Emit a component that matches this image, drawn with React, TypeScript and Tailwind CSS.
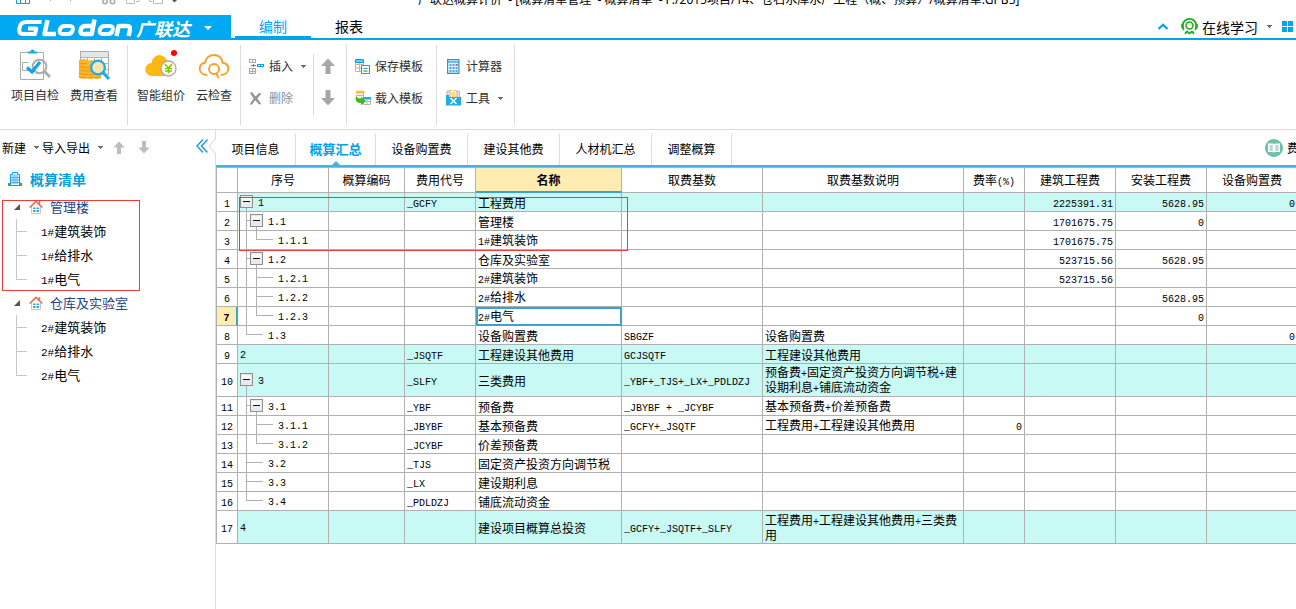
import React from "react";

const SANS = "font-['Noto_Sans_CJK_SC',sans-serif]";
const MONO10 = "font-['Liberation_Mono',monospace] text-[10px] leading-none";
const MONO11 = "font-['Liberation_Mono',monospace] text-[11px] leading-none";

/** Sets half-width characters in a fixed-pitch face so they take half an ideograph each. */
function Mixed({ text, mono = MONO10 }: { text: string; mono?: string }) {
  const parts = text.match(/[\x20-\x7e]+|[^\x20-\x7e]+/g) ?? [];
  return (
    <>
      {parts.map((p, i) =>
        /^[\x20-\x7e]/.test(p) ? (
          <span key={i} className={mono}>{p}</span>
        ) : (
          <React.Fragment key={i}>{p}</React.Fragment>
        )
      )}
    </>
  );
}

function Caret({ className = "text-[#6b6b78]" }: { className?: string }) {
  return (
    <svg viewBox="0 0 5 3" className={`h-[3px] w-[5px] shrink-0 ${className}`} shapeRendering="crispEdges">
      <path d="M0 0h5v1h-1v1h-1v1h-1v-1h-1v-1h-1z" fill="currentColor" />
    </svg>
  );
}

function Arrow({ down = false, color, className }: { down?: boolean; color: string; className: string }) {
  return (
    <svg viewBox="0 0 14 16" className={className}>
      <path d={down ? "M4.500 0h5v8H14l-7 7.500L0 8h4.500z" : "M7 .5l7 7.500H9.500v8h-5V8H0z"} fill={color} />
    </svg>
  );
}

/* ---------- ribbon icons ---------- */

const CheckIcon = () => (
  <svg viewBox="0 0 32 32" className="h-8 w-8" fill="none">
    <path d="M1.500 3.500h23v27h-23z" fill="#fff" stroke="#aaa" />
    <path d="M9 4.500V2.500h2.500a2 2 0 0 1 4 0H18v2z" fill="#1ba8e8" />
    <path d="M9.500 13.500h-6v8h6" stroke="#aaa" />
    <circle cx="20.500" cy="17.500" r="6.800" stroke="#ababab" strokeWidth="2" />
    <path d="M8 18.500l5 4.500 8-10" stroke="#0aa5ec" strokeWidth="3.200" />
    <path d="M25 22l6 6" stroke="#ababab" strokeWidth="3" />
  </svg>
);

const CostIcon = () => (
  <svg viewBox="0 0 32 32" className="h-8 w-8" fill="none">
    <path d="M2.500 2.500h28v23h-28z" fill="#fff" stroke="#aaa" />
    <path d="M3 3h27v5H3z" fill="#e6e6e6" />
    <path d="M2.500 8.500h28M2.500 14.500h28M2.500 20.500h28M9.500 8.500v17M16.500 8.500v17M23.500 8.500v17" stroke="#b4b4b4" />
    <path d="M1 11q4-2 8 0v1q5-2 9 0v5q5 0 5 2v10q-4 2-8 0-3 1.500-6 0-4 1.500-8 0z" fill="#fdb52b" />
    <path d="M1 14q4 1.500 8 0M1 17.500q8 2 17 0M1 21q8 2 22 0M1 24.500q8 2 22 0M1 28q8 2 22 0" stroke="#f0950d" />
    <circle cx="20" cy="18.500" r="6.800" fill="#fde3ac" stroke="#16aeef" strokeWidth="2.200" />
    <path d="M25 23.500l6 6.500" stroke="#16aeef" strokeWidth="3.200" />
  </svg>
);

const PriceIcon = () => (
  <svg viewBox="0 0 34 32" className="h-8 w-[34px]" fill="none">
    <path d="M8 27a6.500 6.500 0 0 1-.5-13 9 8 0 0 1 8-8 9 8 0 0 1 8 8c5 0 7 3 7 6.500S27 27 23 27z" fill="#fdb813" />
    <circle cx="24.500" cy="19.500" r="7.500" fill="#fff" stroke="#b0aaa0" strokeWidth="1.300" />
    <path d="M21 15l3.500 4 3.500-4M21 19.500h7M21 22h7M24.500 19v5.500" stroke="#7fc700" strokeWidth="1.500" />
    <circle cx="30" cy="4" r="3" fill="#f00" />
  </svg>
);

const CloudIcon = () => (
  <svg viewBox="0 0 32 32" className="h-8 w-8" fill="none" stroke="#fba026" strokeWidth="1.900" strokeLinecap="round">
    <path d="M8.500 26c-4-.3-6.800-3-6.800-6.300 0-3.200 2.300-5.400 5.300-5.900C8 9 11.500 6 16 6s7.800 3 8.700 7.800c3.200.5 5.600 2.800 5.600 6 0 3.400-2.800 6-6.800 6.200" />
    <circle cx="16" cy="20" r="5" />
    <path d="M18.500 25l2 3.500" />
  </svg>
);

const InsertIcon = () => (
  <svg viewBox="0 0 15 15" className="h-[15px] w-[15px]" fill="none" shapeRendering="crispEdges">
    <path d="M.5.5h6v3h-6zM3.500.5v3M.5 9.500h6v5h-6zM3.500 9.500v5M.5 12h6" stroke="#aaa" />
    <path d="M8.500 5.500h6v2h-6zM11.500 5.500v2M2 6.500h5M4.500 5v3" stroke="#1a9fd8" />
  </svg>
);

const DeleteIcon = () => (
  <svg viewBox="0 0 13 13" className="h-[13px] w-[13px]">
    <path d="M1 1l2-1 3.500 4.500L10 1l2.500.5L8.300 6.500l4 5.500-2.300.5-3.700-4.200L3 12.500H.5L4.700 6.500z" fill="#949494" />
  </svg>
);

const SaveIcon = () => (
  <svg viewBox="0 0 15 15" className="h-[15px] w-[15px]" fill="none">
    <path d="M.5 1.500h8v11h-8zM.5 5.500h8M.5 9h8M4.500 1v11" stroke="#c2b4a6" />
    <path d="M.5.5h8v3h-8z" fill="#64cdf5" stroke="#109fd8" />
    <path d="M6.500 6.500h8v8h-8z" fill="#fff" stroke="#109fd8" />
    <path d="M8.500 9.500h4" stroke="#109fd8" />
    <path d="M8.500 12h4" stroke="#6bb51d" strokeWidth="1.500" />
  </svg>
);

const LoadIcon = () => (
  <svg viewBox="0 0 16 16" className="h-4 w-4" fill="none">
    <path d="M1.500 2.500h7v6h-7M1 5.500h8" stroke="#c2b4a6" />
    <path d="M1 .7h8.500v3H1z" fill="#fcc23f" />
    <path d="M8.500 8.500h7v6h-7zM8 11.500h8M12 9v6" stroke="#b5b5b5" />
    <path d="M8 7h8v2.500H8z" fill="#1caee9" />
    <path d="M1.500 6C-.5 8.500.5 13 6 13v2.500l5-4.500-5-4.500V9C3.500 9 2.500 8 1.500 6z" fill="#43b821" />
  </svg>
);

const CalcIcon = () => (
  <svg viewBox="0 0 13 15" className="ml-px h-[15px] w-[13px]" fill="none">
    <path d="M.6.6h11.300v13.800H.6z" fill="#dff4fd" stroke="#129fdb" strokeWidth="1.200" />
    <path d="M1 3h11" stroke="#129fdb" strokeWidth="1.200" />
    <path d="M2.500 6h5M2.500 9h8M2.500 12h8" stroke="#3284c9" strokeWidth="1.400" strokeDasharray="2 1" />
    <path d="M8.500 6h2.500" stroke="#f0392b" strokeWidth="1.500" />
  </svg>
);

const ToolIcon = () => (
  <svg viewBox="0 0 15 16" className="h-4 w-[15px]" fill="none">
    <path d="M1 1h12.500v7H1z" fill="#e3e3e3" stroke="#bbb" />
    <path d="M4 0h5l2 2v5H4z" fill="#fff" stroke="#f4ab3c" />
    <path d="M5.500 3h4M5.500 5h4" stroke="#f4ab3c" />
    <path d="M0 5h3v2h12v8.500H0z" fill="#1fabe8" />
    <path d="M4.500 8l6 6M10.500 8l-6 6" stroke="#fff" strokeWidth="1.500" />
  </svg>
);

function BigButton({ icon, label, className }: { icon: React.ReactNode; label: string; className: string }) {
  return (
    <button type="button" className={`flex flex-col items-center gap-[6px] ${className}`}>
      {icon}
      <span className="whitespace-nowrap leading-4">{label}</span>
    </button>
  );
}

function SmallButton({ icon, label, caret, muted }: { icon: React.ReactNode; label: string; caret?: boolean; muted?: boolean }) {
  return (
    <button type="button" className={`flex h-4 items-center whitespace-nowrap ${muted ? "text-[#8c8c96]" : ""}`}>
      <span className="flex w-5 items-center">{icon}</span>
      {label}
      {caret && <span className="ml-2"><Caret /></span>}
    </button>
  );
}

const Rule = () => <div className="h-20 w-px shrink-0 bg-[#dcdcdc]" />;

function TitleBar() {
  return (
    <header className="relative flex h-[15px] overflow-hidden">
      <svg viewBox="0 0 165 6" className="ml-4 h-[6px] w-[165px] shrink-0" fill="none">
        <path d="M.5 0v3.500h13V0M4.500 0v3M9.500 0v3" stroke="#1a9fd8" />
        <path d="M34 0l1 1M54 0l1 1" stroke="#aaa" />
        <circle cx="89" cy="1.500" r="2.200" stroke="#aaa" strokeWidth="1.500" />
        <circle cx="96.500" cy="1.500" r="2.200" stroke="#aaa" strokeWidth="1.500" />
        <path d="M110.500 0v3.500h8V0M120 1.500h3V0M133.500 0v1.500h3M137.500 0v3.500h9V0" stroke="#bbb" />
        <path d="M156 0h5l-2.500 2.500z" fill="#555" />
      </svg>
      <h1 className="-mt-2 ml-[237px] whitespace-nowrap font-['Noto_Sans','Noto_Sans_CJK_SC',sans-serif] text-xs leading-4 text-black">
        广联达概算计价&nbsp; - [概算清单管理&nbsp; - 概算清单&nbsp; - F:/2015项目/14、仓石水库水厂工程（概、预算）/概算清单.GPB5]
      </h1>
    </header>
  );
}

function MenuBar() {
  return (
    <nav className="flex h-[25px] border-b-2 border-[#00a4ee] text-sm">
      <button type="button" className="-mb-[2px] flex w-[231px] shrink-0 items-center bg-[#00a9f1] pl-4 text-white">
        <svg viewBox="0 0 116 18" className="h-[18px] w-[116px]" fill="none" stroke="#fff" strokeLinejoin="round">
          <path d="M25.500 3H11C5.500 3 4.300 5 3.500 9c-.8 4.500 0 6 4 6h11.500l1.300-5.500H12" strokeWidth="4" />
          <path d="M31.500 1L28.500 15H40" strokeWidth="4.500" />
          <path d="M49 7h4.500c3 0 3.800 1 3.200 4-.6 3-1.700 4-4.700 4h-5c-3 0-3.800-1-3.200-4 .6-3 2.200-4 5.200-4z" strokeWidth="4" />
          <path d="M77 7h-7.500c-3 0-4.200 1-4.800 4-.6 3 0 4 3 4h8L78.500.5" strokeWidth="4.500" />
          <path d="M89 7h4.500c3 0 3.800 1 3.200 4-.6 3-1.700 4-4.700 4h-5c-3 0-3.800-1-3.200-4 .6-3 2.200-4 5.200-4z" strokeWidth="4" />
          <path d="M100.500 17L102.700 7h8c3 0 3.700 1 3.200 4l-1.400 6" strokeWidth="4.500" />
        </svg>
        <span className="ml-1 text-lg font-bold italic leading-none">广联达</span>
        <svg viewBox="0 0 8 4" className="ml-[14px] h-1 w-2"><path d="M0 0h8L4 4z" fill="#fff" /></svg>
      </button>
      <a href="#edit" className="-mb-[2px] ml-1 flex h-[25px] w-[76px] items-center justify-center border-b-4 border-[#00a4ee] text-[#00a4ee]">编制</a>
      <a href="#report" className="flex h-[21px] w-[76px] items-center justify-center text-black">报表</a>
      <div className="ml-auto flex items-center text-black">
        <svg viewBox="0 0 12 7" className="h-[7px] w-3" fill="none"><path d="M1.500 6L6 1.700 10.500 6" stroke="#00a4ee" strokeWidth="2.200" /></svg>
        <svg viewBox="0 0 17 17" className="ml-3 h-[17px] w-[17px]" fill="none" stroke="#1fae1f">
          <path d="M2.800 12a7 7 0 1 1 11.400 0" strokeWidth="1.800" />
          <circle cx="8.500" cy="7.500" r="3.500" strokeWidth="1.600" />
          <path d="M1.500 6v4M15.500 6v4" strokeWidth="2.500" />
          <path d="M3.500 16.500c0-3 2-4 3-4l2 2 2-2c1 0 3 1 3 4l-3-1.500-2 1.500-2-1.500z" fill="#1fae1f" stroke="none" />
        </svg>
        <a href="#learn" className="ml-1 leading-5">在线学习</a>
        <span className="ml-[9px] flex"><Caret /></span>
        <svg viewBox="0 0 11 11" className="ml-[10px] mr-[3px] h-[11px] w-[11px]"><path d="M0 0h5v5H0zM6 0h5v5H6zM0 6h5v5H0zM6 6h5v5H6z" fill="#00a4ee" /></svg>
      </div>
    </nav>
  );
}

function Ribbon() {
  return (
    <section className="flex h-[90px] border-b border-[#dcdcdc] pt-[5px] text-xs text-[#2f2f2f]">
      <div className="flex w-[127px] shrink-0 gap-[11px] pl-[11px] pt-1">
        <BigButton className="w-12" icon={<CheckIcon />} label="项目自检" />
        <BigButton className="w-12" icon={<CostIcon />} label="费用查看" />
      </div>
      <Rule />
      <div className="flex w-28 shrink-0 gap-[11px] pl-[9px] pt-1">
        <BigButton className="w-12" icon={<PriceIcon />} label="智能组价" />
        <BigButton className="w-9" icon={<CloudIcon />} label="云检查" />
      </div>
      <Rule />
      <div className="flex w-[72px] shrink-0 flex-col gap-4 pl-2 pt-[13px]">
        <SmallButton icon={<InsertIcon />} label="插入" caret />
        <SmallButton icon={<DeleteIcon />} label="删除" muted />
      </div>
      <div className="mt-[9px] h-[62px] w-px shrink-0 bg-[#dcdcdc]" />
      <div className="flex w-8 shrink-0 flex-col items-center gap-4 pr-1 pt-[13px]">
        <button type="button" aria-label="上移"><Arrow color="#a6a6a6" className="h-4 w-[14px]" /></button>
        <button type="button" aria-label="下移"><Arrow down color="#a6a6a6" className="h-4 w-[14px]" /></button>
      </div>
      <Rule />
      <div className="flex w-[89px] shrink-0 flex-col gap-4 pl-2 pt-[13px]">
        <SmallButton icon={<SaveIcon />} label="保存模板" />
        <SmallButton icon={<LoadIcon />} label="载入模板" />
      </div>
      <Rule />
      <div className="flex w-[77px] shrink-0 flex-col gap-4 pl-[9px] pt-[13px]">
        <SmallButton icon={<CalcIcon />} label="计算器" />
        <SmallButton icon={<ToolIcon />} label="工具" caret />
      </div>
      <Rule />
    </section>
  );
}

const HouseIcon = () => (
  <svg viewBox="0 0 14 14" className="h-[14px] w-[14px]" fill="none">
    <path d="M2.500 7v6.500h9V7" fill="#fff" stroke="#c9c9c9" />
    <path d="M.7 7.500L7 1.500l6.300 6" stroke="#ef6a4b" strokeWidth="1.700" />
    <path d="M10.500 1v3" stroke="#ef6a4b" strokeWidth="1.500" />
    <path d="M4 7.500h2.500V9H4zM7.500 7.500H10V9H7.500zM4 10h2.500v2H4zM7.500 10H10v2H7.500z" fill="#35a9ea" />
  </svg>
);

const groups = [
  { name: "管理楼", items: ["1#建筑装饰", "1#给排水", "1#电气"] },
  { name: "仓库及实验室", items: ["2#建筑装饰", "2#给排水", "2#电气"] },
];

function Sidebar() {
  return (
    <aside className="relative w-[216px] shrink-0 border-r border-[#dedede] text-[13px] text-black">
      <div className="flex h-[37px] items-center pb-[2px] pl-[2px] text-xs">
        <button type="button" className="flex items-center gap-2">新建<Caret /></button>
        <button type="button" className="ml-[3px] flex items-center gap-2">导入导出<Caret /></button>
        <button type="button" aria-label="上移" className="ml-[10px]"><Arrow color="#bdbdbd" className="h-[13px] w-3" /></button>
        <button type="button" aria-label="下移" className="ml-[13px]"><Arrow down color="#bdbdbd" className="h-[13px] w-3" /></button>
        <button type="button" aria-label="收起" className="-mt-1 ml-auto mr-[7px]">
          <svg viewBox="0 0 12 14" className="h-[14px] w-3" fill="none" stroke="#16a0cc" strokeWidth="1.400"><path d="M7 .5L1 7l6 6.500M11.500.5l-6 6.500 6 6.500" /></svg>
        </button>
      </div>
      <svg viewBox="0 0 8 16" className="absolute -right-px top-2 h-4 w-2" fill="#fff"><path d="M8 0L1 8l7 8" stroke="#d5d5d5" /></svg>
      <h2 className="flex h-7 items-center gap-2 pb-1 pl-2 text-sm font-bold text-[#00a0dc]">
        <svg viewBox="0 0 14 14" className="h-[14px] w-[14px]" fill="none">
          <path d="M2.500 13V2.500h2v-2h5v2h2V13" fill="#e8f7ff" stroke="#1b9be0" />
          <path d="M5 3v9M7 2v10M9 3v9M3 5.500h8M3 8h8M3 10.500h8" stroke="#49b3ee" />
          <path d="M0 11h2v2H0zM12 11h2v2h-2zM0 13h14v1H0z" fill="#3fa83c" />
        </svg>
        概算清单
      </h2>
      <ul>
        {groups.map((g) => (
          <li key={g.name}>
            <div className="flex h-6 items-center pl-[14px] text-[#1f4680]">
              <svg viewBox="0 0 6 6" className="h-[6px] w-[6px]"><path d="M6 0v6H0z" fill="#555" /></svg>
              <span className="ml-[9px] mr-[7px]"><HouseIcon /></span>
              {g.name}
            </div>
            <ul>
              {g.items.map((item, i) => (
                <li key={item} className="flex h-6 items-center pl-4">
                  <svg viewBox="0 0 11 24" className="h-6 w-[11px]" fill="none" shapeRendering="crispEdges">
                    <path d={i === g.items.length - 1 ? "M.5 0v12.500H11" : "M.5 0v24M.5 12.500H11"} stroke="#c6c6c6" />
                  </svg>
                  <span className="ml-[14px]"><Mixed text={item} mono={MONO11} /></span>
                </li>
              ))}
            </ul>
          </li>
        ))}
      </ul>
      <div className="pointer-events-none absolute left-[2px] top-[70px] h-[91px] w-[138px] border border-[#f03a3a]" />
    </aside>
  );
}

const tabs = ["项目信息", "概算汇总", "设备购置费", "建设其他费", "人材机汇总", "调整概算"];

function Tabs() {
  return (
    <div role="tablist" className="flex h-[37px] border-b-2 border-[#43b3e4] pt-1 text-xs text-black">
      {tabs.map((t, i) => (
        <button
          key={t}
          type="button"
          role="tab"
          aria-selected={i === 1}
          className={`relative flex shrink-0 items-center justify-center whitespace-nowrap border-r border-[#dcdcdc] pb-[2px] ${t.length === 5 ? "w-[92px]" : "w-20"} ${i === 1 ? "text-[13px] font-bold text-[#00a2e8]" : ""}`}
        >
          {t}
          {i === 1 && (
            <svg viewBox="0 0 8 4" className="absolute bottom-0 left-9 h-1 w-2"><path d="M4 0l4 4H0z" fill="#43b3e4" /></svg>
          )}
        </button>
      ))}
      <button type="button" className="-mr-2 ml-auto flex shrink-0 items-center gap-1 whitespace-nowrap pb-1">
        <svg viewBox="0 0 18 18" className="h-[18px] w-[18px]" fill="none">
          <circle cx="9" cy="9" r="9" fill="#6dc0a9" />
          <path d="M3 4.500h5l1 .8 1-.8h5V13h-5l-1 .8-1-.8H3z" fill="#fff" />
          <path d="M4.500 7h3.300M4.500 9h3.300M4.500 11h3.300M10.200 7h3.300M10.200 9h3.300M10.200 11h3.300" stroke="#6dc0a9" />
        </svg>
        <span className="w-[17px] text-left">费</span>
      </button>
    </div>
  );
}

const columns = [
  { title: "", w: "w-[22px]" },
  { title: "序号", w: "w-[91px]" },
  { title: "概算编码", w: "w-[76px]" },
  { title: "费用代号", w: "w-[71px]" },
  { title: "名称", w: "w-[146px]" },
  { title: "取费基数", w: "w-[141px]" },
  { title: "取费基数说明", w: "w-[201px]" },
  { title: "费率(%)", w: "w-[61px]" },
  { title: "建筑工程费", w: "w-[91px]" },
  { title: "安装工程费", w: "w-[91px]" },
  { title: "设备购置费", w: "w-[91px]" },
];

type Row = {
  no: string;
  level: number;
  box?: boolean;
  last?: boolean;
  trunk?: boolean;
  code?: string;
  name: string;
  base?: string;
  note?: string;
  nums?: string[];
  tall?: boolean;
};

const rows: Row[] = [
  { no: "1", level: 1, box: true, code: "_GCFY", name: "工程费用", nums: ["", "2225391.31", "5628.95", "0"] },
  { no: "1.1", level: 2, box: true, name: "管理楼", nums: ["", "1701675.75", "0", ""] },
  { no: "1.1.1", level: 3, last: true, trunk: true, name: "1#建筑装饰", nums: ["", "1701675.75", "", ""] },
  { no: "1.2", level: 2, box: true, name: "仓库及实验室", nums: ["", "523715.56", "5628.95", ""] },
  { no: "1.2.1", level: 3, trunk: true, name: "2#建筑装饰", nums: ["", "523715.56", "", ""] },
  { no: "1.2.2", level: 3, trunk: true, name: "2#给排水", nums: ["", "", "5628.95", ""] },
  { no: "1.2.3", level: 3, last: true, trunk: true, name: "2#电气", nums: ["", "", "0", ""] },
  { no: "1.3", level: 2, last: true, name: "设备购置费", base: "SBGZF", note: "设备购置费", nums: ["", "", "", "0"] },
  { no: "2", level: 1, code: "_JSQTF", name: "工程建设其他费用", base: "GCJSQTF", note: "工程建设其他费用" },
  { no: "3", level: 1, box: true, code: "_SLFY", name: "三类费用", base: "_YBF+_TJS+_LX+_PDLDZJ", note: "预备费+固定资产投资方向调节税+建设期利息+铺底流动资金", tall: true },
  { no: "3.1", level: 2, box: true, code: "_YBF", name: "预备费", base: "_JBYBF + _JCYBF", note: "基本预备费+价差预备费" },
  { no: "3.1.1", level: 3, trunk: true, code: "_JBYBF", name: "基本预备费", base: "_GCFY+_JSQTF", note: "工程费用+工程建设其他费用", nums: ["0", "", "", ""] },
  { no: "3.1.2", level: 3, last: true, trunk: true, code: "_JCYBF", name: "价差预备费" },
  { no: "3.2", level: 2, code: "_TJS", name: "固定资产投资方向调节税" },
  { no: "3.3", level: 2, code: "_LX", name: "建设期利息" },
  { no: "3.4", level: 2, last: true, code: "_PDLDZJ", name: "铺底流动资金" },
  { no: "4", level: 1, name: "建设项目概算总投资", base: "_GCFY+_JSQTF+_SLFY", note: "工程费用+工程建设其他费用+三类费用", tall: true },
];

function TreeCell({ row }: { row: Row }) {
  const h = row.tall ? 32 : 18;
  const mid = h / 2 - 0.5;
  const x = row.level * 10 - 1.5;
  const lines: string[] = [];
  if (row.level === 2) lines.push(`M8.500 0V${row.last ? mid : h}`, `M8.500 ${mid}H${row.box ? 12 : 25}`);
  if (row.level === 3) {
    if (row.trunk) lines.push(`M8.500 0V${h}`);
    lines.push(`M18.500 0V${row.last ? mid : h}`, `M18.500 ${mid}H35`);
  }
  if (row.box) lines.push(`M${x} ${mid}V${h}`);
  const bare = row.level === 1 && !row.box;
  return (
    <div className={`flex items-center ${row.tall ? "h-8" : "h-[18px]"} ${bare ? "pl-[2px]" : ""}`}>
      {!bare && (
        <svg
          viewBox={`0 0 ${row.level * 10 + 10} ${h}`}
          width={row.level * 10 + 10}
          height={h}
          className="shrink-0"
          fill="none"
          shapeRendering="crispEdges"
        >
          <path d={lines.join("")} stroke="#b0b0b0" />
          {row.box && (
            <>
              <rect x={x - 6} y={mid - 6} width="12" height="12" fill="#e8eaed" stroke="#8e8f8f" />
              <rect x={x - 4.5} y={mid - 4.5} width="9" height="5" fill="#f8f8f8" />
              <path d={`M${x - 3.5} ${mid}h7`} stroke="#111" />
            </>
          )}
        </svg>
      )}
      <span className="flex pt-1"><Mixed text={row.no} /></span>
    </div>
  );
}

function Sheet() {
  return (
    <div className="relative overflow-hidden">
      <table className="w-[1082px] table-fixed border-separate border-spacing-0 border-t border-[#b0b0b0] text-xs text-black">
        <thead>
          <tr className="h-[25px]">
            {columns.map((c, i) => (
              <th
                key={i}
                scope="col"
                className={`${c.w} border-r border-[#b0b0b0] p-0 leading-5 ${i === 0 ? "border-l" : ""} ${i === 4 ? "border-b-2 border-b-[#38a3d1] bg-[#ffecb3] font-bold" : "border-b font-normal"}`}
              >
                <Mixed text={c.title} />
              </th>
            ))}
          </tr>
        </thead>
        <tbody>
          {rows.map((r, i) => {
            const active = i === 6;
            const cell = "border-b border-r border-[#b0b0b0] p-0 leading-[14px]";
            const text = `${cell} pl-[2px] pt-px whitespace-nowrap`;
            return (
              <tr key={r.no} className={r.level === 1 ? "bg-[#c8f9f5]" : "bg-white"}>
                <th
                  scope="row"
                  className={`${cell} border-l pt-px ${active ? "border-r-2 border-r-[#38a3d1] bg-[#ffecb3] font-bold" : "bg-white font-normal"}`}
                >
                  <Mixed text={String(i + 1)} />
                </th>
                <td className={cell}><TreeCell row={r} /></td>
                <td className={cell} />
                <td className={text}><Mixed text={r.code ?? ""} /></td>
                <td className={`${text} ${active ? "outline-2 -outline-offset-2 outline-[#38a3d1]" : ""}`}><Mixed text={r.name} /></td>
                <td className={text}><Mixed text={r.base ?? ""} /></td>
                <td className={`${cell} pl-[2px] pr-1 ${r.tall ? "" : "pt-px"}`}><Mixed text={r.note ?? ""} /></td>
                {[0, 1, 2, 3].map((n) => (
                  <td key={n} className={`${cell} pr-[2px] pt-px text-right`}><Mixed text={r.nums?.[n] ?? ""} /></td>
                ))}
              </tr>
            );
          })}
        </tbody>
      </table>
      <div className="pointer-events-none absolute left-[23px] top-[30px] h-[54px] w-[389px] border border-[#f03a3a]" />
    </div>
  );
}

export default function App() {
  return (
    <div className={`flex min-h-screen flex-col overflow-hidden bg-white ${SANS}`}>
      <TitleBar />
      <MenuBar />
      <Ribbon />
      <div className="flex flex-1">
        <Sidebar />
        <main className="min-w-0 flex-1">
          <Tabs />
          <Sheet />
        </main>
      </div>
    </div>
  );
}
